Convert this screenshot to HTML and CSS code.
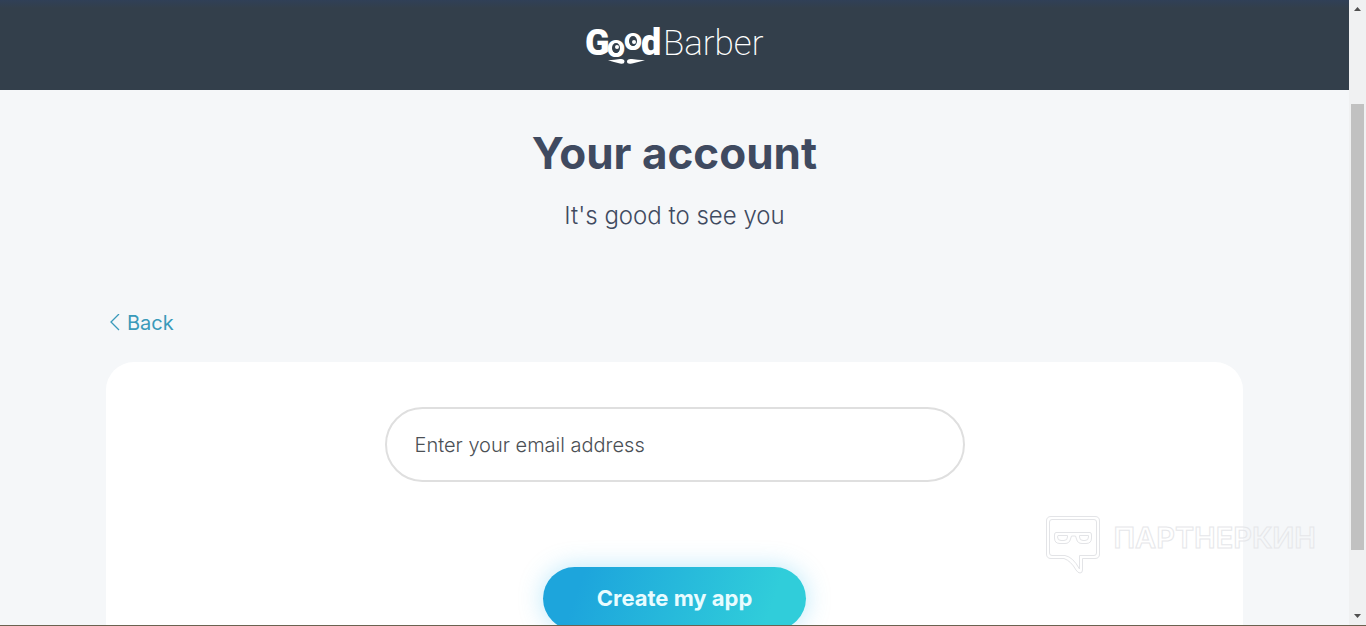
FILE: index.html
```
<!DOCTYPE html>
<html lang="en">
<head>
<meta charset="utf-8">
<meta name="viewport" content="width=device-width, initial-scale=1">
<title>Your account</title>
<link rel="stylesheet" href="styles.css">
</head>
<body>
<div class="window">
  <div class="page">
    <header class="topbar">
      <a class="brand" href="#" aria-label="GoodBarber">
        <svg class="logo" width="176" height="42" viewBox="587 24 176 42">
          <g class="logo-good">
            <text class="logo-cap" x="585" y="55">G</text>
            <text class="logo-o" x="607" y="57">o</text>
            <text class="logo-o" x="624" y="50">o</text>
            <text class="logo-cap" x="641" y="55">d</text>
          </g>
          <ellipse class="logo-eye" cx="616" cy="48" rx="4" ry="5"/>
          <ellipse class="logo-eye" cx="633" cy="41" rx="4" ry="5"/>
          <circle class="logo-pupil" cx="617" cy="47" r="2"/>
          <circle class="logo-pupil" cx="634" cy="42" r="2"/>
          <path class="logo-pupil" d="M608 60.3Q615 60 620 59Q624.500 58.500 624.500 61.500Q624.500 64.500 620 63.500Q614 62 608 60.300ZM645 60.300Q637 60 632 59Q627 58.500 627 61.500Q627 64.500 632 63.500Q638 62 645 60.300Z"/>
          <text class="logo-barber" x="663" y="55">Barber</text>
        </svg>
      </a>
    </header>
    <main class="content">
      <h1 class="title">Your account</h1>
      <p class="subtitle">It's good to see you</p>
      <a class="back" href="#">
        <svg width="10" height="18" viewBox="0 0 10 18" aria-hidden="true"><path d="M9 0L1 8l8 8" fill="none" stroke="currentColor" stroke-width="1.3"/></svg>
        Back
      </a>
      <form class="card">
        <input class="email" type="email" placeholder="Enter your email address" aria-label="Enter your email address">
        <button class="submit" type="button">Create my app</button>
      </form>
    </main>
  </div>
  <div class="scrollbar" aria-hidden="true">
    <svg width="17" height="17" viewBox="0 0 17 17"><path d="M5 11h7L8.500 7z" fill="#505050"/></svg>
    <div class="track"><div class="thumb"></div></div>
    <svg width="17" height="17" viewBox="0 0 17 17"><path d="M5 6h7L8.500 10z" fill="#505050"/></svg>
  </div>
  <div class="watermark">
    <svg width="56" height="60" viewBox="0 0 56 60" fill="none" stroke="#e3e4e7" aria-hidden="true">
      <path d="M5 1.500H49Q53.500 1.500 53.500 6V39Q53.500 43.500 49 43.500H36.500V55Q36.500 58 34 58Q32 58 30 55Q25 46 18 43.500H5Q.5 43.500.5 39V6Q.5 1.500 5 1.500Z"/>
      <path d="M6 4.500H48Q50.500 4.500 50.500 7V38Q50.500 40.500 48 40.500H33.500V54Q27 42 19 40.500H6Q3.500 40.500 3.500 38V7Q3.500 4.500 6 4.500Z"/>
      <path d="M10 17.500H44Q45.500 17.500 45.500 20V23Q45.500 28.500 40 28.500H36Q31.500 28.500 30.500 24L29.500 21H25.500L24.500 24Q23.500 28.500 19 28.500H14Q8.500 28.500 8.500 23V20Q8.500 17.500 10 17.500Z"/>
      <path d="M12 20.500H21.500V22Q21.500 25.500 18 25.500H15Q11.500 25.500 11.500 22ZM33.500 20.500H42.500V22Q42.500 25.500 39 25.500H37Q33.500 25.500 33.500 22Z"/>
    </svg>
    <span class="watermark-text">ПАРТНЕРКИН</span>
  </div>
</div>
</body>
</html>
```
FILE: styles.css
```
* {
  box-sizing: border-box;
}

body {
  margin: 0;
  font-family: Inter, "Open Sans", sans-serif;
  color: #3f4a60;
}

.window {
  position: relative;
  display: flex;
  height: 100vh;
  overflow: hidden;
  background: #f5f7f9;
  border-bottom: 1px solid #6b6250;
}

.page {
  flex: 1;
  min-width: 0;
}

.topbar {
  display: flex;
  justify-content: center;
  padding: 24px 0;
  background: linear-gradient(#304057, #333f4b 8px);
}

.brand,
.logo {
  display: block;
}

.logo {
  overflow: visible;
}

.logo text {
  fill: #fff;
}

.logo-good {
  font-family: Roboto, sans-serif;
  font-weight: 900;
}

.logo-cap {
  font-size: 36px;
}

.logo-o {
  font-size: 32px;
}

.logo-eye {
  fill: #333f4b;
}

.logo-pupil {
  fill: #fff;
}

.logo-barber {
  font-family: Roboto, sans-serif;
  font-weight: 200;
  font-size: 35px;
}

.content {
  display: flex;
  flex-direction: column;
  padding: 32px 106px 0;
}

.title {
  margin: 0;
  font-size: 44px;
  line-height: 62px;
  font-weight: 700;
  text-align: center;
}

.subtitle {
  margin: 16px 0 0;
  font-size: 24px;
  line-height: 32px;
  font-weight: 300;
  text-align: center;
}

.back {
  display: flex;
  align-items: center;
  align-self: flex-start;
  gap: 7px;
  margin: 76px 0 24px 4px;
  font-size: 20px;
  line-height: 30px;
  color: #3a9aba;
  text-decoration: none;
}

.card {
  display: flex;
  flex-direction: column;
  align-items: center;
  gap: 85px;
  padding: 45px 24px 60px;
  background: #fff;
  border-radius: 28px;
}

.email {
  width: 100%;
  max-width: 580px;
  padding: 23px 28px 21px;
  border: 2px solid #dfdfdf;
  border-radius: 38px;
  font: 300 20px/27px Inter, "Open Sans", sans-serif;
  color: #4b5055;
  background: #fff;
}

.email::placeholder {
  color: #4b5055;
  opacity: 1;
}

.submit {
  padding: 16px 54px;
  border: 0;
  border-radius: 32px;
  font: 700 22px/31px Inter, "Open Sans", sans-serif;
  color: #e8fcff;
  background: linear-gradient(110deg, #1da5dc 15%, #30cdda 85%);
  box-shadow: 0 0 24px rgba(60, 190, 240, 0.35);
}

.scrollbar {
  display: flex;
  flex-direction: column;
  width: 17px;
  background: #f0f1f2;
}

.track {
  flex: 1;
  display: flex;
  flex-direction: column;
  padding: 87px 2px 58px;
}

.thumb {
  flex: 1;
  background: #c1c1c1;
}

.watermark {
  position: absolute;
  right: 50px;
  bottom: 50px;
  display: flex;
  gap: 12px;
}

.watermark-text {
  font: 600 29px/46px Inter, sans-serif;
  color: transparent;
  -webkit-text-stroke: 1px #e6e7ea;
}
```
